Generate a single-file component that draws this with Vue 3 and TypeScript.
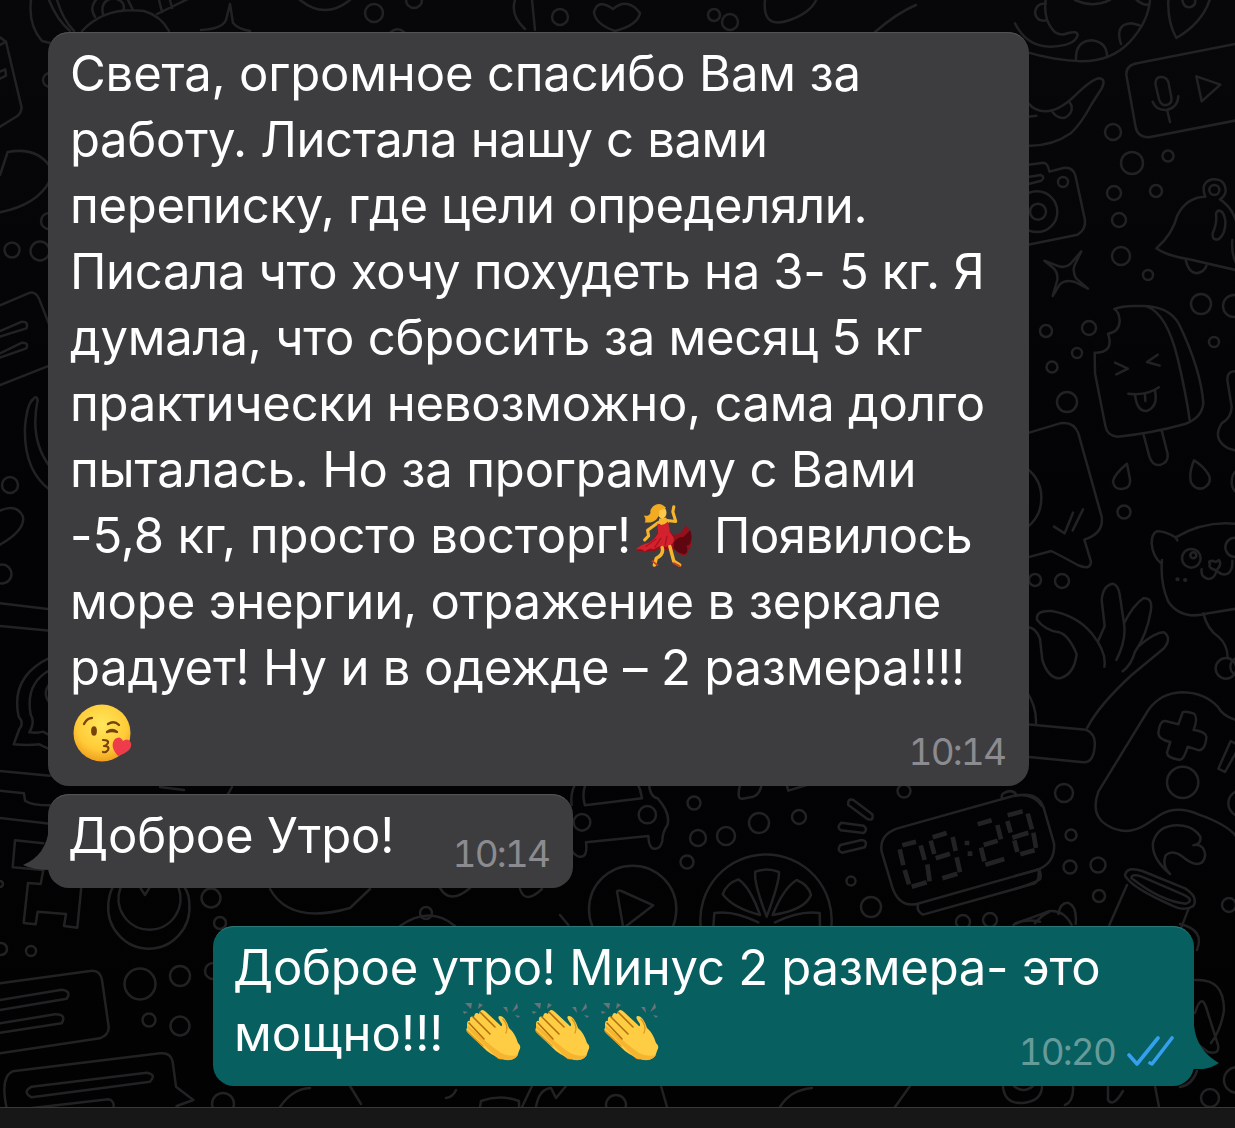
<script setup lang="ts">
interface Line {
  text: string
  spacing: number
  emoji?: 'dancer' | 'kiss' | 'clap'
  count?: number
  after?: string
  afterSpacing?: number
}

const thanks: Line[] = [
  { text: 'Света, огромное спасибо Вам за', spacing: -0.17 },
  { text: 'работу. Листала нашу с вами', spacing: -0.38 },
  { text: 'переписку, где цели определяли.', spacing: -0.33 },
  { text: 'Писала что хочу похудеть на 3- 5 кг. Я', spacing: -0.32 },
  { text: 'думала, что сбросить за месяц 5 кг', spacing: -0.24 },
  { text: 'практически невозможно, сама долго', spacing: -0.27 },
  { text: 'пыталась. Но за программу с Вами', spacing: -0.19 },
  { text: '-5,8 кг, просто восторг!', spacing: -0.13, emoji: 'dancer', count: 1, after: 'Появилось', afterSpacing: -0.5 },
  { text: 'море энергии, отражение в зеркале', spacing: -0.15 },
  { text: 'радует! Ну и в одежде – 2 размера!!!!', spacing: -0.19 },
  { text: '', spacing: 0, emoji: 'kiss', count: 1 },
]
const greeting: Line[] = [{ text: 'Доброе Утро!', spacing: -0.17 }]
const reply: Line[] = [
  { text: 'Доброе утро! Минус 2 размера- это', spacing: -0.25 },
  { text: 'мощно!!!', spacing: 0.1, emoji: 'clap', count: 3 },
]

const messages = [
  { id: 'thanks', lines: thanks, time: '10:14', own: false, tail: false },
  { id: 'greeting', lines: greeting, time: '10:14', own: false, tail: true },
  { id: 'reply', lines: reply, time: '10:20', own: true, tail: true },
]

type Dot = [number, number, number]
const dots: Dot[] = [
  [1113, 132, 8], [1132, 163, 11], [1168, 156, 5.5], [1114, 193, 7], [1156, 191, 6], [1119, 220, 7],
  [1121, 256, 9], [1148, 275, 5], [1046, 331, 6], [1089, 328, 7], [1077, 353, 5], [1052, 367, 5.5],
  [1067, 402, 10], [1201, 304, 10], [1234, 306, 11], [1214, 342, 5], [1124, 512, 6.5], [1035, 580, 6],
  [1062, 581, 7], [1064, 793, 9], [1071, 835, 5.5], [1070, 867, 6.5], [1098, 865, 7.5], [1099, 896, 6],
  [1229, 905, 7], [694, 803, 6.5], [698, 838, 8], [726, 836, 9], [759, 823, 10], [799, 817, 7],
  [687, 862, 6.5], [904, 791, 6.5], [851, 881, 4.5], [871, 907, 10], [963, 922, 7], [990, 920, 7],
  [374, 13, 9], [414, 0, 8], [50, 80, 7], [12, 250, 7.5], [40, 251, 9.5], [49, 221, 8],
  [10, 485, 8], [2, 574, 9.5], [211, 898, 9.5], [220, 923, 6], [1, 949, 6], [31, 951, 5],
  [140, 984, 15.5], [180, 976, 10], [213, 971, 8], [149, 1020, 6.5], [180, 1026, 9.5], [223, 1104, 11],
  [560, 17, 8], [714, 15, 6], [730, 22, 8], [426, 913, 6], [1210, 1098, 9], [1237, 1080, 13],
  [616, 1105, 10], [0, 884, 3],
]
const clapFingers = ['M8 24L23 40', 'M12 18L29 35', 'M19 13L34 28']
</script>

<template>
  <main class="screen">
    <svg class="wallpaper" viewBox="0 0 1235 1128" aria-hidden="true">
      <circle v-for="(d, i) in dots" :key="i" :cx="d[0]" :cy="d[1]" :r="d[2]" />
      <!-- planet, location pin, voice note, banana, camera, bell, sparkle -->
      <g transform="translate(1015 0) scale(.33333)" stroke-width="7.5">
        <path d="M0 70Q35 140 105 140Q180 138 188 105Q186 92 160 99Q130 112 112 88Q85 55 92 0M30 155Q120 182 200 184Q290 184 345 125Q400 65 405 0M92 12Q64 8 60 38Q64 67 96 61M180 0Q235 25 285 0M365 0Q382 15 400 14M183 181Q180 124 230 121Q275 126 276 168M318 132Q298 72 350 70L373 76M460 0Q457 65 484 114Q560 70 584 0M502 0Q505 22 525 22Q542 18 541 0" />
        <path d="M670 130L370 189Q332 194 334 225L362 382Q368 412 402 412L670 360M434 231Q419 236 422 255L432 298Q439 318 455 315Q472 311 469 292L460 246Q454 229 434 231M413 305Q423 332 454 330Q488 323 490 289M457 332L465 366M544 229L616 254L560 304Z" />
        <path d="M35 437Q110 440 167 400Q198 372 230 312L260 265Q274 237 253 235Q232 236 180 287Q130 335 90 334Q60 333 40 310M113 337Q130 358 150 353Q173 342 170 318L164 307M40 350L64 347" />
        <path d="M35 495L85 488Q99 489 103 515L145 504Q173 500 181 526L210 660Q213 688 188 704L35 735M40 531L77 525Q92 531 79 542L40 552" />
        <circle cx="66" cy="635" r="61" /><circle cx="69" cy="635" r="24" /><circle cx="144" cy="546" r="15" />
        <path d="M88 782L124 796Q148 807 166 792L199 754L179 795Q171 815 184 836L219 866L180 846Q150 838 134 854L113 888L127 840Q129 817 115 804Z" />
        <path d="M571 590Q515 591 487 646Q472 704 424 745Q452 766 522 778L670 812M615 598Q650 620 664 665M571 590Q554 548 592 538Q632 536 632 574Q629 590 615 598M610 632Q626 630 631 662Q633 698 612 717Q591 724 593 700Q607 668 603 645Q603 635 610 632M512 780Q521 819 546 820Q568 815 574 798M652 720Q648 770 670 800" />
        <circle cx="598" cy="570" r="15" />
      </g>
      <!-- ice cream, phone, drops, cat -->
      <g transform="translate(1015 290) scale(.33333)" stroke-width="7.5">
        <path d="M298 57Q312 65 314 91Q314 126 279 131Q299 188 239 188L240 250L271 407Q276 438 308 440Q410 430 510 402Q560 384 565 340Q558 240 492 102Q460 44 370 48Q325 46 298 57M395 49Q455 70 488 205Q514 315 524 390M386 435L403 499Q412 528 435 525Q461 518 458 492L440 421M300 218L339 236L304 253M428 194L396 216L434 227M340 311Q395 318 432 292M360 315Q366 365 395 363Q430 350 420 303M390 316L391 333" />
        <path d="M35 430L135 400Q176 393 190 430L260 680Q267 730 208 749L228 815Q227 842 188 825Q145 801 109 783L35 803M35 535Q80 570 79 625Q79 680 35 713M117 710L149 730L174 668M173 721L204 658" />
        <path d="M336 521Q300 550 294 573Q296 598 320 597Q348 595 345 568ZM537 511Q521 550 528 577Q542 602 566 594Q591 581 582 556Q565 527 537 511ZM670 540Q650 545 650 580Q654 605 670 610M670 245Q637 238 637 270L650 350Q650 382 620 400Q590 448 640 475L670 484" />
        <path d="M487 751L482 742Q570 690 670 702M482 742Q447 722 425 724Q410 731 410 760Q413 799 438 820M441 810Q435 880 460 935Q500 992 580 970L670 955M585 822Q577 812 595 812Q601 820 612 810Q622 822 605 841Q578 835 585 822M604 842Q600 866 580 867Q556 861 560 838M610 846Q622 858 638 851Q654 841 652 812" />
        <circle cx="529" cy="805" r="28" /><circle cx="535" cy="796" r="9" /><circle cx="660" cy="772" r="29" />
        <path class="spot" d="M487 868h1M510 870h1" />
      </g>
      <!-- ok hand, gamepad, tail, squiggle, cup -->
      <g transform="translate(1015 570) scale(.33333)" stroke-width="7.5">
        <path d="M35 172Q62 170 75 207L82 270Q100 326 135 325Q178 313 185 252Q160 194 132 187Q90 181 66 149Q62 120 110 123Q186 137 230 190Q276 248 268 290M250 212L269 168L260 90Q264 45 294 41Q310 47 314 73L327 160Q335 210 304 270M327 160Q355 105 385 85Q415 82 407 125Q395 195 360 245Q349 285 323 304M372 228Q420 187 447 187Q471 205 447 235L350 315Q252 405 217 473M35 365Q65 410 63 460M35 463L213 479Q244 493 239 530Q235 579 205 577L35 560M565 130Q577 178 610 200Q638 224 638 263" />
        <circle cx="633" cy="295" r="31" /><circle cx="673" cy="290" r="27" />
        <path d="M670 452Q625 441 608 410Q567 367 500 367Q437 369 400 420L250 665Q225 735 275 765Q335 802 395 762L435 735Q485 705 550 733Q650 768 670 810M503 427Q512 422 537 431Q550 442 536 480Q578 486 574 505Q570 540 552 541L518 530Q505 574 492 569Q455 563 456 547L466 516Q431 508 430 490Q434 451 451 453L490 463ZM670 525L647 513L610 596L630 606L670 535" />
        <circle cx="503" cy="637" r="47" /><circle cx="679" cy="700" r="39" />
        <path d="M465 912Q440 887 452 856Q471 838 500 858Q539 891 560 878Q579 858 563 833Q549 820 535 826Q560 822 556 800Q539 772 505 767Q430 759 414 818Q409 864 465 912ZM330 917Q334 887 382 903L510 955Q551 980 535 1008Q508 1026 468 1005Q350 953 330 917ZM349 924Q440 995 513 1001Q540 990 505 974L380 920Q350 910 349 924M336 945L283 1065M520 1018L500 1070M0 1060Q60 1040 100 1024Q145 1017 170 1065M130 1032Q136 997 159 998Q187 1009 182 1062M60 1060Q80 1035 102 1026" />
        <path d="M0 678Q65 663 85 710L117 820Q122 875 72 898L0 918M66 898Q80 901 76 926Q71 935 0 957" />
      </g>
      <!-- car, speech, citrus, rays, clock -->
      <g transform="translate(560 770) scale(.33333)" stroke-width="7.5">
        <path d="M35 105Q30 65 50 35M76 44Q65 75 75 106L246 85Q243 60 230 35M267 40Q269 80 293 85Q333 130 322 166Q307 187 307 213Q301 237 285 236Q267 238 265 198L78 217Q84 264 58 260Q42 256 35 240M540 45Q529 90 548 86L580 80Q603 70 605 40M680 45L685 62L740 45M171 364Q177 359 184 363L280 406L190 475Z" />
        <circle cx="66" cy="157" r="25" /><circle cx="262" cy="134" r="26" /><circle cx="218" cy="418" r="131" />
        <path d="M422 470A197 197 0 1 1 814 470M620 440Q580 335 586 305Q620 292 657 306Q659 335 620 440M600 435Q570 350 535 328Q500 340 488 373Q520 415 600 435M638 435Q670 355 710 330Q746 345 753 375Q735 420 638 435M595 457Q520 420 463 429L460 470M645 457Q720 420 779 429L780 470" />
        <path d="M865 105Q862 84 880 90L937 133Q942 154 922 147ZM844 158L911 167Q925 177 911 189L842 181Q828 171 844 158M841 225L905 210Q925 213 914 232L846 248Q829 242 841 225" />
        <path d="M1370 75L1010 176Q957 196 965 245L997 352Q1017 412 1070 402L1440 297M1325 83Q1325 72 1330 70Q1354 56 1368 72M1074 405Q1069 423 1089 434L1425 340Q1438 331 1436 303" />
        <path d="M1365 76Q1420 68 1446 108" />
        <path class="digits" d="M1027 226L1068 215M1019 238L1030 286M1082 226L1094 270M1034 300L1047 343M1102 283L1109 334M1055 350L1100 337M1118 202L1160 189M1112 212L1123 252M1127 265L1170 251M1178 201L1187 243M1190 262L1200 307M1147 325L1192 311M1253 163L1295 151M1312 165L1323 208M1271 225L1313 212M1263 233L1273 274M1276 284L1333 267M1343 136L1388 124M1342 153L1352 188M1403 131L1416 178M1357 203L1405 188M1363 211L1372 246M1420 188L1428 234M1381 253L1424 241M1214 219h14M1223 251h14" />
        <path d="M0 435L25 465M1360 465Q1395 445 1440 455" />
      </g>
      <!-- top edge -->
      <path d="M31 0Q28 25 42 41L50 43M49 0Q57 20 70 31M57 0Q63 20 74 31M95 17Q88 6 99 -3M103 14Q100 1 113 -2Q127 1 123 11M82 31Q105 6 144 11Q161 16 169 31M127 -2L133 10M159 0L162 12M170 0L172 8M157 14L190 -2M201 30Q222 29 226 20L230 4L233 23Q238 29 250 31M300 0Q325 20 350 0M390 33Q397 26 404 32M515 0Q510 15 525 29M532 0L535 30M594 12Q598 -2 613 9Q628 -3 640 13Q638 25 615 31Q595 24 594 12M765 0Q762 30 790 20Q812 12 817 -2M875 32Q897 13 916 5" />
      <!-- left edge -->
      <g transform="translate(0 30) scale(.33333)" stroke-width="7.5">
        <path d="M0 22L18 35L63 225Q69 242 52 258L0 290M0 45L18 35M0 125L16 118L18 137L0 146M0 435L23 366Q110 350 150 410M0 547Q110 525 148 455M0 826L90 788Q107 785 117 806L150 890M0 903L66 875Q87 875 79 895L0 920M0 970L66 938Q87 937 79 955L0 983M0 1065L150 1006M96 1112Q110 1092 113 1112" />
      </g>
      <g transform="translate(0 400) scale(.33333)" stroke-width="7.5">
        <path d="M113 0Q88 120 150 200M75 80Q70 210 150 270M75 80Q80 20 96 0M0 332Q50 310 69 350Q76 390 0 434M0 610L150 628M0 678L150 692M150 773Q30 830 56 950Q73 970 58 987L41 1033Q82 1037 118 1033L150 1048M150 810Q75 850 92 944Q106 965 88 997Q115 1000 129 995L150 1006M150 850Q125 880 150 910M0 1113L150 1127" />
      </g>
      <g transform="translate(0 780) scale(.33333)" stroke-width="7.5">
        <path d="M0 32L72 40L75 62Q95 76 150 76M0 114L150 131M130 190L45 181L38 262L130 270L122 312L84 309L71 429L107 433L113 395L198 402L192 438L232 443L244 320M420 322L435 345L449 322" />
        <path d="M568 370A122 125 0 1 1 325 370Q328 340 338 322M554 322Q568 345 568 370M535 322A93 93 0 1 1 362 322" />
        <path d="M0 610L270 573Q300 568 306 600L326 740Q327 765 300 775L0 820M0 660L185 629Q216 633 200 656L0 690M0 730L165 703Q201 702 185 730L0 758M20 985Q0 890 38 874L480 820Q512 817 518 845L528 920L580 960L530 978M95 920L440 878Q471 883 450 905L95 952Q65 936 95 920M90 985L325 958Q345 962 340 985" />
      </g>
      <!-- right edge beside the reply, and the strip below it -->
      <path d="M1180 924Q1205 930 1197 950M1195 980Q1224 978 1224 1010Q1221 1030 1211 1043M1195 1013Q1201 993 1206 1007L1218 1045Q1220 1055 1208 1052L1195 1042M1003 1086Q1004 1104 1023 1103Q1042 1101 1042 1086M1014 1086Q1023 1094 1033 1086M1073 1086Q1074 1101 1065 1105M1108 1086V1100Q1113 1108 1123 1091M1155 1086L1159 1107M1180 1087Q1192 1085 1197 1071M456 1090Q453 1097 446 1098M480 1107L481 1101Q500 1094 519 1101L519 1107M522 1107L532 1086M536 1107Q539 1089 551 1088L556 1098L566 1086M661 1086L667 1107M780 1107Q790 1090 812 1088M350 1086L361 1104M280 1107Q292 1089 310 1088M895 1107L910 1086" />
      <!-- gap between the incoming bubbles -->
      <path d="M160 787L184 790M232 787L228 794M440 888Q450 905 470 888M520 889Q525 905 542 889M270 889Q290 925 350 908L370 889M400 926Q430 905 455 926" />
    </svg>

    <section class="chat">
      <article
        v-for="m in messages"
        :key="m.id"
        class="bubble"
        :class="[m.id, { own: m.own }]"
      >
        <svg v-if="m.tail && !m.own" class="tail" viewBox="0 0 30 44" aria-hidden="true">
          <path d="M26 0Q24 28 0 38Q10 43 29 43V0Z" />
        </svg>
        <svg v-if="m.tail && m.own" class="tail" viewBox="0 0 30 44" aria-hidden="true">
          <path d="M3 0Q5 25 28 38Q16 46 0 44V0Z" />
        </svg>
        <p class="body">
          <span v-for="(l, i) in m.lines" :key="i" class="line">
            <span v-if="l.text" :style="{ letterSpacing: l.spacing + 'px' }">{{ l.text }}</span>
            <svg v-if="l.emoji === 'dancer'" class="emoji dancer" viewBox="0 0 66 66" role="img" aria-label="танцовщица">
              <path d="M22 32Q19 39 14 41Q5 43 1 49Q8 49 10 51Q17 48 20 50Q25 46 31 49L41 48Q47 57 55 52Q53 49 57 47Q58 43 58 40Q60 30 52 23Q49 33 39 33L36 28Z" fill="#970f1a" />
              <path d="M40 41Q43 35 50 35L57 28Q60 37 56 43L53 44Q56 50 51 53Q43 51 40 47Z" fill="#5f0711" />
              <path d="M24 31Q20 38 14 41Q5 43 1 48Q8 46 10 50Q16 45 19 48Q26 43 32 45Q41 43 40 36L36 30Z" fill="#d3222d" />
              <path d="M11 45L22 37M20 46L27 36M31 44L33 34" fill="none" stroke="#a5121e" stroke-width="1.200" />
              <path d="M28 46Q30 53 22 57L20 64M36 45L40 60L46 64" fill="none" stroke="#f6b52c" stroke-width="3.600" stroke-linecap="round" stroke-linejoin="round" />
              <path d="M18 60L23 64M40 62L46 65" fill="none" stroke="#d23a24" stroke-width="1.800" stroke-linecap="round" />
              <path d="M24 20L13 28L14 34L10 38M33 18L42 19L39 9L40 4" fill="none" stroke="#f6b52c" stroke-width="3.200" stroke-linecap="round" stroke-linejoin="round" />
              <path d="M25 16L32 15L35 20L30 25L24 21Z" fill="#f6b52c" />
              <path d="M23 21Q28 25 34 19L36 30L24 33Z" fill="#d3222d" />
              <ellipse cx="28" cy="10" rx="4.500" ry="6" fill="#ffc848" />
              <path d="M32 5Q26-2 19 3Q15 7 16 10Q15 14 9 13Q12 17 10 20Q18 21 22 17Q26 13 25 8Z" fill="#f3ab22" />
            </svg>
            <svg v-if="l.emoji === 'kiss'" class="emoji kiss" viewBox="0 0 60 60" role="img" aria-label="поцелуй">
              <defs>
                <radialGradient id="face" cx=".5" cy=".35" r=".68">
                  <stop offset="0" stop-color="#ffe75a" /><stop offset=".65" stop-color="#ffcb38" /><stop offset="1" stop-color="#ee9a1b" />
                </radialGradient>
              </defs>
              <circle cx="29" cy="29" r="28.500" fill="url(#face)" />
              <path d="M11 20Q14 14 19 14M35 20Q41 16 46 21M34 28Q39 24 44 28Q39 26 34 28" fill="none" stroke="#77420b" stroke-width="2.300" stroke-linecap="round" stroke-linejoin="round" />
              <ellipse cx="21" cy="27" rx="2.900" ry="4.700" fill="#77420b" />
              <path d="M30 36Q36 36 35 39Q33 42 31 42Q37 42 35 46Q33 49 30 48" fill="none" stroke="#77420b" stroke-width="2.200" stroke-linecap="round" stroke-linejoin="round" />
              <path d="M45 52Q36 42 42 35Q47 31 50 37Q55 33 58 39Q60 47 45 52Z" fill="#ee3c4b" />
            </svg>
            <template v-if="l.emoji === 'clap'">
              <svg v-for="n in l.count" :key="n" class="emoji clap" viewBox="0 0 62 64" role="img" aria-label="аплодисменты">
                <path d="M34 57Q39 63 44 59L39 53Z" fill="#e8971e" />
                <path d="M6 26Q6 21 9 22Q8 16 13 18Q14 12 18 15Q20 8 25 13L39 26Q41 29 41 25Q35 17 39 17Q44 17 48 29Q54 34 57 44Q61 47 58 52Q56 62 45 61Q35 59 26 52L8 35Q4 31 6 29Z" fill="#ffcd43" />
                <path d="M6 29L28 51Q35 59 45 61Q53 62 57 56Q48 58 40 54Q26 44 17 35L6 26Z" fill="#f6b530" />
                <path v-for="f in clapFingers" :key="f" :d="f" fill="none" stroke="#b36e10" stroke-width="1.600" stroke-linecap="round" />
                <path d="M6 32L22 47M42 20Q48 27 45 34" fill="none" stroke="#dc951d" stroke-width="1.300" stroke-linecap="round" />
                <path d="M4 4L10 10L11 4ZM18 4L17 10L22 6ZM2 12L7 13L3 15ZM42 8L47 14L46 8ZM51 13L56 4L57 9ZM54 16L59 17L57 19Z" fill="#68737a" />
              </svg>
            </template>
            <span v-if="l.after" class="after" :style="{ letterSpacing: l.afterSpacing + 'px' }">{{ l.after }}</span>
          </span>
        </p>
        <footer class="meta">
          <time>{{ m.time }}</time>
          <svg v-if="m.own" class="ticks" viewBox="0 0 48 32" aria-hidden="true">
            <path d="M3 20L11 29L32 3M24 28L26 29L46 3" />
          </svg>
        </footer>
      </article>
    </section>
    <div class="toolbar"></div>
  </main>
</template>

<style>
body {
  margin: 0;
  background: #030304;
}
</style>

<style scoped>
.screen {
  position: relative;
  box-sizing: border-box;
  display: flex;
  flex-direction: column;
  width: 1235px;
  height: 1128px;
  overflow: hidden;
  background: linear-gradient(#070709, #030305 45%, #020203);
  font-family: Inter, "Noto Sans", sans-serif;
}
.wallpaper {
  position: absolute;
  inset: 0;
  width: 1235px;
  height: 1128px;
  fill: none;
  stroke: #222224;
  stroke-width: 2.5;
  stroke-linecap: round;
  stroke-linejoin: round;
}
.wallpaper .spot {
  stroke-width: 12;
}
.wallpaper .digits {
  stroke-width: 14;
  stroke-linecap: butt;
}
.chat {
  position: relative;
  display: flex;
  flex: 1;
  flex-direction: column;
  align-items: flex-start;
  padding: 32px 41px 0 48px;
}
.bubble {
  position: relative;
  box-sizing: border-box;
  border-radius: 21px;
  background: #3d3d3f;
  box-shadow: inset 0 2px 1px -1px #555557;
  color: #fff;
}
.thanks {
  width: 981px;
  height: 754px;
  padding: 9px 22px;
}
.greeting {
  width: 525px;
  height: 94px;
  margin-top: 8px;
  padding: 9px 20px;
}
.reply {
  align-self: flex-end;
  width: 981px;
  height: 160px;
  margin-top: 38px;
  padding: 9px 20px;
}
.reply .line:last-child {
  padding-left: 1px;
}
.own {
  background: #075f60;
  box-shadow: inset 0 2px 1px -1px #30797a;
}
.body {
  margin: 0;
  font-size: 49px;
  line-height: 66px;
}
.line {
  display: flex;
  align-items: center;
  height: 66px;
  white-space: pre;
}
.emoji {
  flex: none;
}
.dancer {
  width: 64px;
  height: 64px;
  margin: -3px 0 0 4px;
}
.kiss {
  width: 60px;
  height: 60px;
  margin-left: 3px;
}
.clap {
  width: 62px;
  height: 64px;
  margin: -6px 7px 0 0;
}
.clap:nth-of-type(1) {
  margin-left: 17px;
}
.after {
  margin-left: 15px;
}
.meta {
  position: absolute;
  right: 24px;
  bottom: 13px;
  display: flex;
  align-items: center;
  color: #8b8b90;
  font-size: 37px;
  font-variant-numeric: tabular-nums;
  letter-spacing: -1.9px;
  line-height: 42px;
}
.own .meta {
  right: 20px;
  color: #659b9b;
}
.ticks {
  width: 48px;
  height: 32px;
  margin: -3px 0 0 11px;
  fill: none;
  stroke: #359ff0;
  stroke-width: 3.6;
  stroke-linecap: round;
  stroke-linejoin: round;
}
.tail {
  position: absolute;
  left: -25px;
  bottom: 17px;
  width: 30px;
  height: 44px;
  fill: #3d3d3f;
}
.own .tail {
  right: -27px;
  left: auto;
  fill: #075f60;
}
.toolbar {
  position: relative;
  box-sizing: border-box;
  height: 21px;
  border-top: 1px solid #39393b;
  background: #171718;
}
</style>
